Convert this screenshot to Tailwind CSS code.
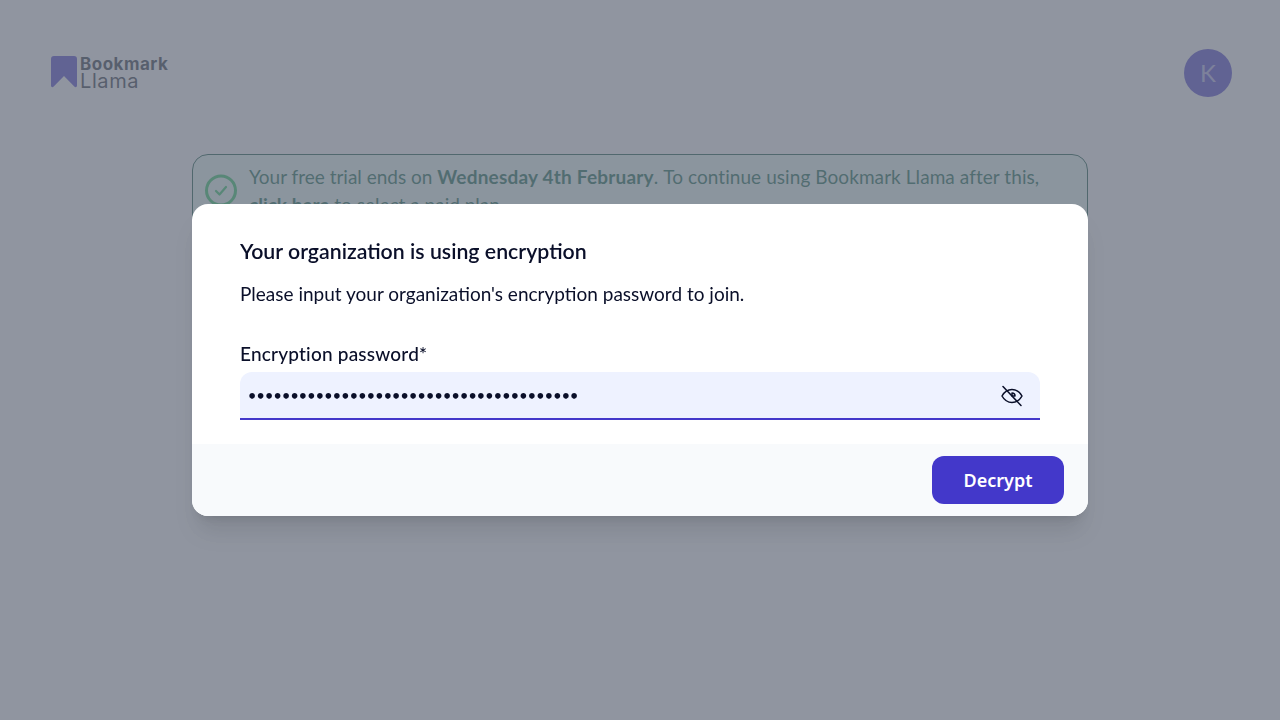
<!DOCTYPE html>
<html lang="en">
<head>
    <meta charset="UTF-8">
    <meta name="viewport" content="width=device-width, initial-scale=1.0">
    <title>Bookmark Llama</title>
    <script src="https://cdn.jsdelivr.net/npm/@tailwindcss/browser@4"></script>
</head>
<body class="bg-white h-screen overflow-hidden font-['Lato','Noto_Sans',sans-serif] text-[#0a0f29]">
<div class="px-[48px] pt-[49px]">
    <header class="flex items-center justify-between">
        <div class="flex items-center gap-[3px] pl-[3px] -mt-[2px]">
            <svg class="w-[26px] h-[32px]" viewBox="0 0 26 32"><path d="M3 0h20a3 3 0 0 1 3 3v26.500c0 1.600-1.600 2.200-2.700 1.100L13 20 2.700 30.600C1.600 31.700 0 31.100 0 29.500V3a3 3 0 0 1 3-3z" fill="#4338ca"/></svg>
            <div class="flex flex-col pt-[2px] text-[#1f2937] font-['Inter',sans-serif]">
                <span class="font-bold text-[17px] leading-[16px] tracking-[0.5px]">Bookmark</span>
                <span class="text-[20px] leading-[19px] tracking-[0.6px]">Llama</span>
            </div>
        </div>
        <div class="w-[48px] h-[48px] rounded-full bg-[#4338ca] text-white/60 flex items-center justify-center text-2xl">K</div>
    </header>
    <div class="mt-[57px] mx-auto w-[896px] h-[120px] border border-[#064e3b] bg-[#ecfdf5] rounded-[16px] pl-[12px] pr-[40px] flex gap-[11px] pt-[8px] text-[#065f46] text-[19px] leading-[28px]">
        <svg class="w-[33px] h-[33px] mt-[11px] shrink-0" viewBox="0 0 33 33" fill="none" stroke="#22c55e" stroke-width="3" stroke-linecap="round" stroke-linejoin="round"><circle cx="16" cy="16.500" r="14.500"/><path d="M11 17l3.500 3.500 6.500-7.500" stroke-width="2.200"/></svg>
        <p>Your free trial ends on <b class="tracking-[0.2px]">Wednesday 4th February</b>. <span class="tracking-[0.07px]">To continue using Bookmark Llama after this,</span> <b>click here</b> to select a paid plan.</p>
    </div>
</div>

<div class="fixed inset-0 bg-[#6b7280]/75"></div>

<div class="fixed left-[192px] top-[204px] w-[896px] h-[312px] rounded-[16px] bg-white shadow-xl overflow-hidden flex flex-col">
    <div class="flex-1 px-[48px] pt-[32px]">
        <h2 class="text-[21.300px] leading-[30px] font-semibold">Your organization is using encryption</h2>
        <p class="mt-[14px] text-[19px] leading-[28px]">Please input your organization's encryption password to join.</p>
        <label class="block mt-[32px] text-[19px] tracking-[0.2px] leading-[28px] font-medium">Encryption password*</label>
        <div class="mt-[4px] h-[48px] bg-[#eef2ff] rounded-t-[12px] border-b-2 border-[#4338ca] flex items-center justify-between pl-[7px] pr-[16px]">
            <span class="pt-[3px] text-[16px] tracking-[-1.750px] font-['DejaVu_Sans',sans-serif] font-bold">•••••••••••••••••••••••••••••••••••••••</span>
            <svg class="w-[24px] h-[24px] mt-[2px]" viewBox="0 0 24 24" fill="none" stroke="#0a0f29" stroke-width="1.500" stroke-linecap="round" stroke-linejoin="round"><path d="M2 12c2.500-4.500 6-6.500 10-6.500s7.500 2 10 6.500c-2.500 4.500-6 6.500-10 6.500S4.500 16.500 2 12z"/><path d="M12 9a3 3 0 0 1 3 3h-3z"/><path d="M3 2.500 21 21.500"/></svg>
        </div>
    </div>
    <div class="h-[72px] bg-[#f8fafc] flex items-center justify-end pr-[24px]">
        <button class="w-[132px] h-[48px] rounded-[12px] bg-[#4338ca] text-white text-[18px] font-semibold font-['Noto_Sans',sans-serif]">Decrypt</button>
    </div>
</div>
</body>
</html>
